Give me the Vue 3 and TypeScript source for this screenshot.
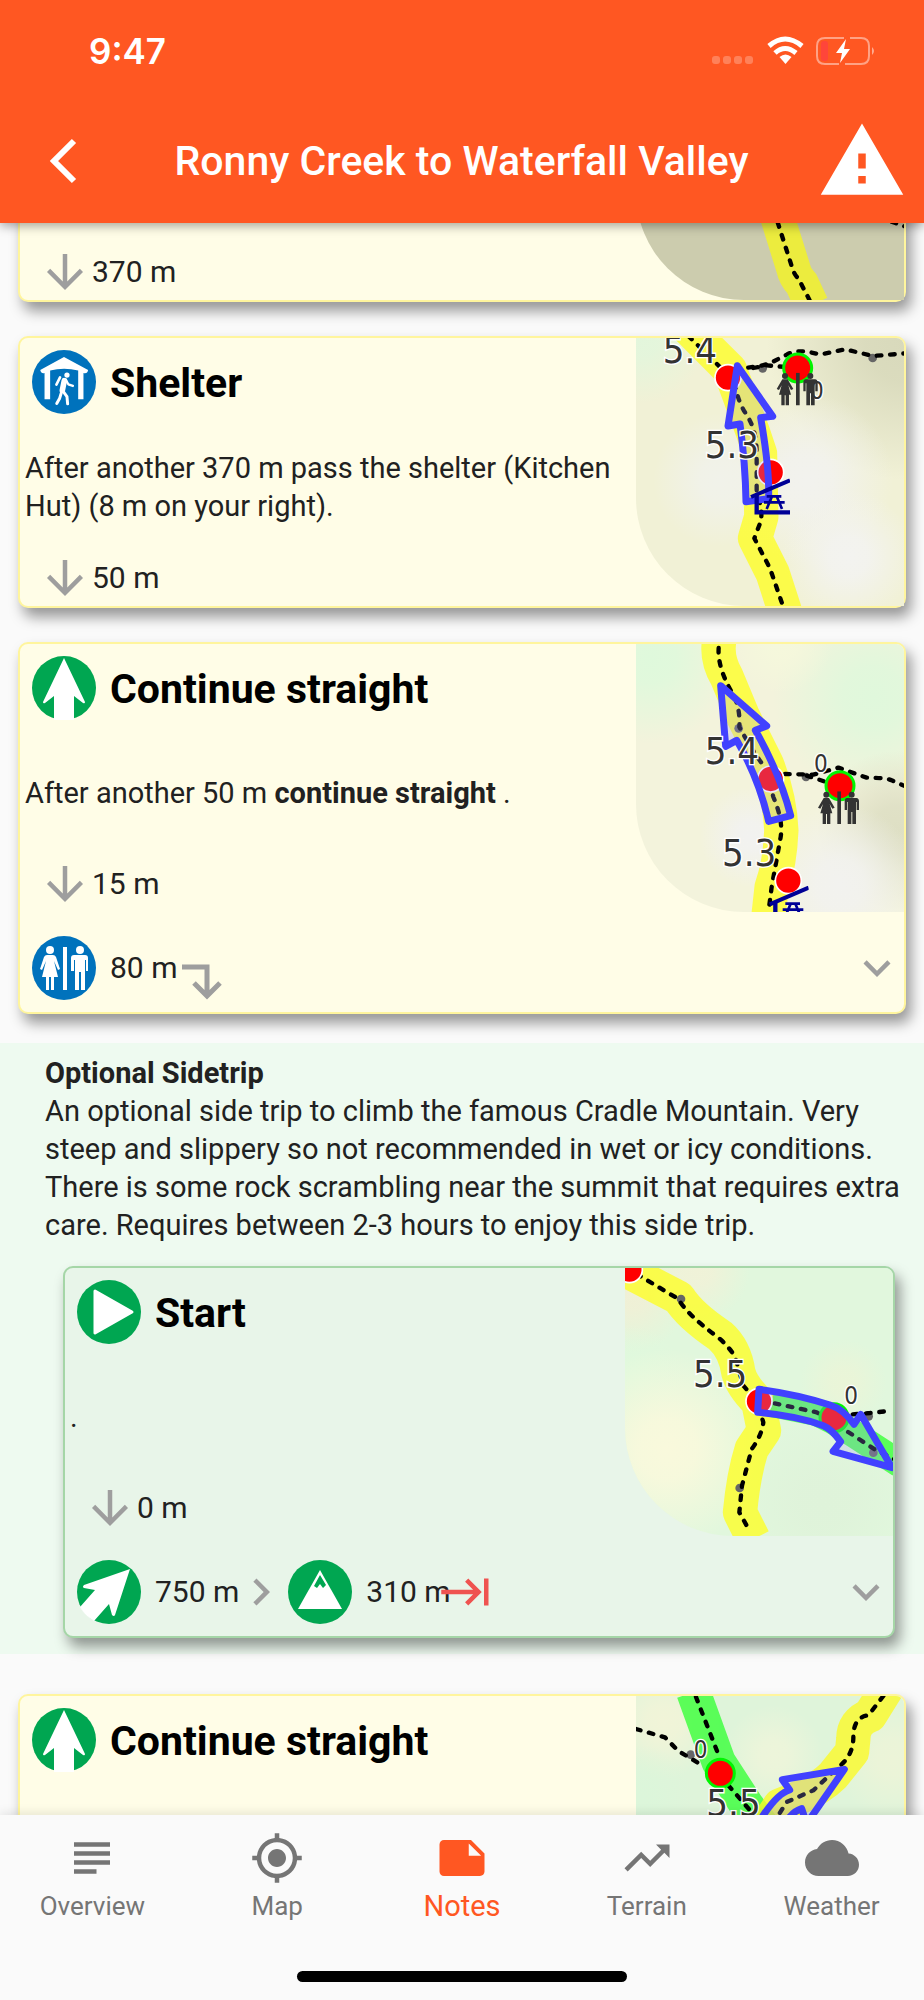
<script setup lang="ts">
import { ref } from 'vue'

interface Stroke { d: string; color?: string; width?: number }
interface Dot { x: number; y: number; ring?: string }
interface Label { x: number; y: number; text: string; small?: boolean }
interface Blob { x: number; y: number; r: number; color: string }
interface TrailMap {
  box: string
  base: string
  blobs: Blob[]
  trails: Stroke[]
  dashes: string[]
  bends?: Dot[]
  dots?: Dot[]
  arrow?: string
  labels?: Label[]
  toilet?: Dot
  hut?: Dot
}
interface Leg { icon: string; distance: string; after: 'turn' | 'next' | 'end' }
interface Card {
  id: string
  icon?: string
  title?: string
  text?: string
  strong?: string
  tail?: string
  distance?: string
  legs?: Leg[]
  map: TrailMap
}
interface Block { id: string; side?: boolean; heading?: string; intro?: string; cards: Card[] }

const yellow = 'rgba(255,255,20,.72)'
const green = 'rgba(60,255,60,.82)'

const blocks: Block[] = [
  {
    id: 'main-a',
    cards: [
      {
        id: 'previous',
        distance: '370 m',
        map: {
          box: '48 -549 804 804',
          base: '#ccccae',
          blobs: [],
          trails: [{ d: 'M470 0 L520 160 Q525 185 545 205 L575 270', color: 'rgba(240,240,50,.9)' }],
          dashes: ['M473 22 L514 150 Q520 176 536 192 L572 262', 'M815 20 L860 36'],
        },
      },
      {
        id: 'shelter',
        icon: 'shelter',
        title: 'Shelter',
        text: 'After another 370 m pass the shelter (Kitchen Hut) (8 m on your right).',
        distance: '50 m',
        map: {
          box: '48 54 804 804',
          base: '#f1f1d6',
          blobs: [
            { x: 860, y: 60, r: 420, color: '#d8d9bb' },
            { x: 60, y: 50, r: 200, color: '#e3f6dc' },
            { x: 560, y: 480, r: 260, color: '#f2f2ee' },
            { x: 685, y: 710, r: 200, color: '#f3f3f0' },
            { x: 300, y: 480, r: 200, color: '#f1f2ea' },
          ],
          trails: [{ d: 'M200 20 L330 150 L400 340 L420 400 L424 590 L405 655 L458 760 L500 890' }],
          dashes: [
            'M205 48 L345 185 Q350 240 380 285 Q410 330 410 400 L410 520 Q432 575 420 610 L403 655 L450 745 L500 890',
            'M345 148 L420 138 L450 130 L500 104 Q535 84 600 104 L675 88 L760 108 L856 100',
            'M400 144 L440 136 L530 144',
          ],
          bends: [{ x: 428, y: 145 }, { x: 758, y: 114 }],
          dots: [{ x: 324, y: 173 }, { x: 452, y: 457 }, { x: 533, y: 144, ring: '#00f500' }],
          arrow: 'M352 137 L458 289 L422 293 Q444 420 446 500 L446 536 L378 545 Q376 430 360 312 L324 318 Z',
          labels: [
            { x: 128, y: 130, text: '5.4' },
            { x: 254, y: 415, text: '5.3' },
            { x: 570, y: 238, text: '0', small: true },
          ],
          toilet: { x: 533, y: 158 },
          hut: { x: 390, y: 475 },
        },
      },
      {
        id: 'straight',
        icon: 'straight',
        title: 'Continue straight',
        text: 'After another 50 m ',
        strong: 'continue straight',
        tail: ' .',
        distance: '15 m',
        legs: [{ icon: 'toilet', distance: '80 m', after: 'turn' }],
        map: {
          box: '48 41 804 804',
          base: '#f3f3dc',
          blobs: [
            { x: 90, y: 80, r: 260, color: '#dff9dc' },
            { x: 760, y: 200, r: 300, color: '#e0f8dc' },
            { x: 480, y: 30, r: 160, color: '#f5f8dc' },
            { x: 830, y: 600, r: 240, color: '#dedfc4' },
            { x: 660, y: 760, r: 240, color: '#f2f2ef' },
            { x: 390, y: 620, r: 150, color: '#f2f2f0' },
          ],
          trails: [{ d: 'M300 20 Q285 80 320 140 L370 260 L440 400 Q480 500 484 600 Q480 700 455 770 L444 870' }],
          dashes: [
            'M296 53 Q292 110 335 185 Q362 230 358 290 Q390 350 440 420 L460 500 Q490 570 482 620 L455 770 L446 840',
            'M495 431 L580 433 L655 412 L740 442 Q800 442 815 450 L856 468',
            'M560 436 L640 462',
          ],
          bends: [{ x: 356, y: 294 }, { x: 558, y: 440 }],
          dots: [{ x: 452, y: 446 }, { x: 505, y: 751 }, { x: 660, y: 466, ring: '#00f500' }],
          arrow: 'M302 166 L440 287 L406 300 Q480 430 512 556 L446 573 Q415 440 350 330 L317 348 Z',
          labels: [
            { x: 254, y: 402, text: '5.4' },
            { x: 306, y: 707, text: '5.3' },
            { x: 582, y: 425, text: '0', small: true },
          ],
          toilet: { x: 657, y: 483 },
          hut: { x: 446, y: 766 },
        },
      },
    ],
  },
  {
    id: 'sidetrip',
    side: true,
    heading: 'Optional Sidetrip',
    intro:
      'An optional side trip to climb the famous Cradle Mountain. Very steep and slippery so not recommended in wet or icy conditions. There is some rock scrambling near the summit that requires extra care. Requires between 2-3 hours to enjoy this side trip.',
    cards: [
      {
        id: 'start',
        icon: 'start',
        title: 'Start',
        text: '.',
        distance: '0 m',
        legs: [
          { icon: 'bearing', distance: '750 m', after: 'next' },
          { icon: 'summit', distance: '310 m', after: 'end' },
        ],
        map: {
          box: '45 57 804 804',
          base: '#e1f7dd',
          blobs: [
            { x: 60, y: 130, r: 180, color: '#f0f0d6' },
            { x: 260, y: 60, r: 160, color: '#f0f2d8' },
            { x: 70, y: 380, r: 150, color: '#e0f9dd' },
            { x: 170, y: 600, r: 300, color: '#f9f9dc' },
            { x: 700, y: 400, r: 130, color: '#eaf5d8' },
            { x: 640, y: 760, r: 260, color: '#dff3da' },
          ],
          trails: [
            { d: 'M20 50 L206 146 Q240 200 330 260 Q375 300 385 370 Q395 410 445 460 L462 545 L425 600 Q400 680 390 790 L430 870' },
            { d: 'M485 463 L620 490 L670 515 L740 560 L870 645', color: green, width: 82 },
          ],
          dashes: [
            'M80 75 L205 150 Q230 195 320 262 Q350 285 375 322 L400 410 L440 455 L460 520 Q455 560 425 600 L396 710 L388 790 L420 848',
            'M455 455 L620 490 L670 520 L800 605 L856 632',
            'M728 496 L780 492 L835 486',
          ],
          bends: [{ x: 213, y: 150 }, { x: 389, y: 717 }, { x: 776, y: 502 }, { x: 790, y: 611 }],
          dots: [{ x: 58, y: 62 }, { x: 447, y: 457 }, { x: 672, y: 506, ring: '#00f500' }],
          arrow: 'M447 421 Q560 436 660 468 Q700 480 732 526 L752 496 L846 656 L669 607 L692 578 Q665 540 640 530 Q560 500 443 490 Z',
          labels: [{ x: 249, y: 413, text: '5.5' }, { x: 703, y: 464, text: '0', small: true }],
        },
      },
    ],
  },
  {
    id: 'main-b',
    cards: [
      {
        id: 'straight-on',
        icon: 'straight',
        title: 'Continue straight',
        map: {
          box: '108 112 804 804',
          base: '#dff4da',
          blobs: [
            { x: 190, y: 190, r: 170, color: '#f1f4d8' },
            { x: 520, y: 290, r: 150, color: '#edf5da' },
            { x: 880, y: 300, r: 180, color: '#ecf4d8' },
            { x: 120, y: 420, r: 160, color: '#dcf6da' },
          ],
          trails: [
            { d: 'M280 100 L356 310 L440 440 L500 520', color: green },
            { d: 'M860 90 L810 170 Q760 190 760 240 L756 280 L700 350 Q650 400 540 440 L500 500', color: 'rgba(250,250,40,.8)' },
          ],
          dashes: [
            'M288 115 L360 300 M385 380 L450 455',
            'M850 112 L805 170 Q762 175 760 230 Q762 290 715 325 L640 395 L560 430 L535 470',
            'M108 211 L195 236 L235 277 L300 316',
          ],
          bends: [{ x: 272, y: 288 }],
          dots: [{ x: 361, y: 344, ring: '#00f500' }],
          arrow: 'M733 332 L547 363 L569 394 Q530 405 480 485 L540 520 Q570 460 605 450 L620 495 Z',
          labels: [{ x: 319, y: 473, text: '5.5' }, { x: 281, y: 298, text: '0', small: true }],
        },
      },
    ],
  },
]

const tabs = [
  { id: 'overview', label: 'Overview', d: 'M14 17H4v2h10v-2zm6-8H4v2h16V9zM4 15h16v-2H4v2zM4 5v2h16V5H4z' },
  {
    id: 'map',
    label: 'Map',
    d: 'M12 8c-2.21 0-4 1.79-4 4s1.79 4 4 4 4-1.79 4-4-1.79-4-4-4zm8.94 3A8.994 8.994 0 0013 3.06V1h-2v2.06A8.994 8.994 0 003.06 11H1v2h2.06A8.994 8.994 0 0011 20.94V23h2v-2.06A8.994 8.994 0 0020.94 13H23v-2h-2.06zM12 19c-3.87 0-7-3.13-7-7s3.13-7 7-7 7 3.13 7 7-3.13 7-7 7z',
  },
  {
    id: 'notes',
    label: 'Notes',
    d: 'M22 10l-6-6H4c-1.1 0-2 .9-2 2v12.01c0 1.1.9 1.99 2 1.99l16-.01c1.1 0 2-.89 2-1.99v-8zm-7-4.5l5.500 5.500H15V5.500z',
  },
  {
    id: 'terrain',
    label: 'Terrain',
    d: 'M16 6l2.290 2.290-4.880 4.880-4-4L2 16.590 3.410 18l6-6 4 4 6.300-6.290L22 12V6z',
  },
  {
    id: 'weather',
    label: 'Weather',
    d: 'M19.350 10.040C18.670 6.590 15.640 4 12 4 9.110 4 6.600 5.640 5.350 8.040 2.340 8.360 0 10.910 0 14c0 3.310 2.690 6 6 6h13c2.760 0 5-2.240 5-5 0-2.640-2.050-4.780-4.650-4.960z',
  },
]
const active = ref('notes')
</script>

<template>
  <div class="screen">
    <svg class="sprite" aria-hidden="true">
      <symbol id="shelter" viewBox="25 24 194 194">
        <circle cx="122" cy="121" r="97" fill="#0072bc" />
        <path d="M122 45 L195 85 Q193 97 181 94 V173 H165 V86 Q122 76 80 86 V173 H63 V94 Q53 97 50 85 Z" fill="#fff" />
        <circle cx="131" cy="100" r="8" fill="#fff" />
        <g fill="none" stroke="#fff" stroke-linecap="round" stroke-linejoin="round">
          <path d="M110 107 L99 129" stroke-width="8" />
          <path d="M123 117 L117 146" stroke-width="17" />
          <path d="M127 113 L135 128 L149 133" stroke-width="7" />
          <path d="M115 150 L109 170 L100 186" stroke-width="9" />
          <path d="M120 150 L131 165 L133 187" stroke-width="9" />
        </g>
      </symbol>
      <symbol id="straight" viewBox="0 0 64 64">
        <circle cx="32" cy="32" r="32" fill="#00a651" />
        <path d="M32 2 L53 46 Q53 48 51 47 L42 40 V64 H22 V40 L13 47 Q11 48 11 46 Z" fill="#fff" />
      </symbol>
      <symbol id="toilet" viewBox="0 0 64 64">
        <circle cx="32" cy="32" r="32" fill="#0072bc" />
        <g fill="#fff">
          <circle cx="18" cy="14" r="4" />
          <path d="M15 19 H21 Q23 19 24 21 L28 33 L26 34 L22 25 L26 41 H22 V54 H19 V41 H17 V54 H14 V41 H10 L14 25 L10 34 L8 33 L12 21 Q13 19 15 19Z" />
          <path d="M31 11 H35 V54 H31Z" />
          <circle cx="48" cy="14" r="4" />
          <path d="M42 19 H53 Q56 19 56 22 V35 H54 V24 H53 V54 H49 V36 H47 V54 H43 V24 H42 V35 H39 V22 Q39 19 42 19Z" />
        </g>
      </symbol>
      <symbol id="start" viewBox="0 0 64 64">
        <circle cx="32" cy="32" r="32" fill="#00a651" />
        <path d="M18 11 L55 32 L18 53 Z" fill="#fff" stroke="#fff" stroke-width="3" stroke-linejoin="round" />
      </symbol>
      <symbol id="bearing" viewBox="0 0 64 64">
        <circle cx="32" cy="32" r="32" fill="#00a651" />
        <path d="M53 9 L38 55 Q37 57 35 55 L32 44 L17 61 Q7 55 3 47 L18 30 L7 28 Q5 27 7 25 Z" fill="#fff" />
      </symbol>
      <symbol id="summit" viewBox="0 0 64 64">
        <circle cx="32" cy="32" r="32" fill="#00a651" />
        <path d="M32 10 L54 49 H10 Z" fill="#fff" />
        <path d="M32 15 L38 25 L35 28 L32 24 L29 28 L26 26 Z" fill="#00a651" />
      </symbol>
      <symbol id="toilet-pin" viewBox="0 0 130 100">
        <g fill="#333">
          <circle cx="26" cy="10" r="9" />
          <path d="M18 20 H34 L51 49 L44 52 L36 38 L44 66 H38 V98 H28 V68 H25 V98 H15 V66 H8 L16 38 L8 52 L1 49 Z" />
          <path d="M59 0 H70 V98 H59Z" />
          <circle cx="102" cy="10" r="9" />
          <path d="M88 20 H116 Q124 21 124 30 V56 H117 V32 H115 V98 H104 V62 H101 V98 H90 V32 H88 V56 H81 V30 Q81 21 88 20Z" />
        </g>
      </symbol>
      <symbol id="hut-pin" viewBox="0 0 120 110">
        <g fill="none" stroke="#000096" stroke-width="12">
          <path d="M3 56 L120 6" />
          <path d="M20 48 V102 H120" stroke-width="13" />
          <path d="M50 54 H94 M42 72 H104 M66 54 L50 92 M80 54 L96 92" stroke-width="8" />
        </g>
      </symbol>
    </svg>

    <header class="top">
      <div class="status">
        <span class="clock">9:47</span>
        <svg class="status-icons" viewBox="0 0 166 32" aria-hidden="true">
          <g fill="#fff" fill-opacity=".25">
            <rect x="0" y="21" width="8" height="8" rx="3" />
            <rect x="11" y="21" width="8" height="8" rx="3" />
            <rect x="22" y="21" width="8" height="8" rx="3" />
            <rect x="33" y="21" width="8" height="8" rx="3" />
          </g>
          <g fill="none" stroke="#fff" stroke-width="5">
            <path d="M57 11 Q73 -3 90 11" />
            <path d="M63 18 Q73 9 84 18" />
          </g>
          <path d="M73.500 29 L67.500 22 Q73.500 17 79.500 22Z" fill="#fff" />
          <g fill="none" stroke="#fff" stroke-opacity=".45" stroke-width="2">
            <path d="M132 3 H113 Q105 3 105 11 V21 Q105 29 113 29 H127" />
            <path d="M138 3 H149 Q157 3 157 11 V21 Q157 29 149 29 H133" />
          </g>
          <path d="M160 12 Q164 16 160 20Z" fill="#fff" fill-opacity=".5" />
          <rect x="109" y="6" width="7" height="20" rx="3" fill="#ff453a" />
          <path d="M134 4 L124 18 H130 L128 28 L138 14 H132Z" fill="#fff" />
        </svg>
      </div>
      <div class="bar">
        <button class="back" type="button" aria-label="Back">
          <svg viewBox="0 0 30 46"><path d="M26 3 L6 23 L26 43" fill="none" stroke="#fff" stroke-width="6" /></svg>
        </button>
        <h1>Ronny Creek to Waterfall Valley</h1>
        <button class="alert" type="button" aria-label="Alerts">
          <svg viewBox="0 0 24 24"><path d="M1 21h22L12 2 1 21zm12-3h-2v-2h2v2zm0-4h-2v-4h2v4z" fill="#fff" /></svg>
        </button>
      </div>
    </header>

    <main class="scroller">
      <div class="notes">
        <section v-for="block in blocks" :key="block.id" class="block" :class="{ side: block.side }">
          <div v-if="block.heading" class="intro">
            <h2>{{ block.heading }}</h2>
            <p>{{ block.intro }}</p>
          </div>
          <article v-for="card in block.cards" :key="card.id" class="card">
            <div class="card-main">
              <div class="info">
                <div class="head">
                  <svg v-if="card.icon" class="badge" aria-hidden="true"><use :href="'#' + card.icon" /></svg>
                  <h3 v-if="card.title">{{ card.title }}</h3>
                </div>
                <p class="text">{{ card.text }}<strong v-if="card.strong">{{ card.strong }}</strong>{{ card.tail }}</p>
                <div class="distance">
                  <template v-if="card.distance">
                    <svg class="mi" viewBox="0 0 24 24" aria-hidden="true">
                      <path d="M20 12l-1.410-1.410L13 16.170V4h-2v12.170l-5.580-5.590L4 12l8 8 8-8z" />
                    </svg>
                    <span>{{ card.distance }}</span>
                  </template>
                </div>
              </div>
              <svg class="map" :viewBox="card.map.box" aria-hidden="true">
                <defs>
                  <radialGradient v-for="(b, i) in card.map.blobs" :id="card.id + i" :key="i">
                    <stop offset="0" :stop-color="b.color" />
                    <stop offset=".3" :stop-color="b.color" stop-opacity=".9" />
                    <stop offset="1" :stop-color="b.color" stop-opacity="0" />
                  </radialGradient>
                </defs>
                <rect x="0" y="-600" width="1000" height="1600" :fill="card.map.base" />
                <circle v-for="(b, i) in card.map.blobs" :key="'b' + i" :cx="b.x" :cy="b.y" :r="b.r" :fill="`url(#${card.id}${i})`" />
                <path
                  v-for="(t, i) in card.map.trails" :key="'t' + i" class="trail" :d="t.d"
                  :stroke="t.color ?? yellow" :stroke-width="t.width ?? 103"
                />
                <circle v-for="(p, i) in card.map.bends" :key="'p' + i" :cx="p.x" :cy="p.y" r="13" fill="#666" />
                <path v-for="(d, i) in card.map.dashes" :key="'d' + i" class="dash" :d="d" />
                <circle
                  v-for="(p, i) in card.map.dots" :key="'o' + i" :cx="p.x" :cy="p.y" :r="p.ring ? 42 : 39"
                  fill="#f00" :stroke="p.ring ?? '#fff'" :stroke-width="p.ring ? 9 : 5"
                />
                <path v-if="card.map.arrow" class="arrow" :d="card.map.arrow" />
                <text
                  v-for="(l, i) in card.map.labels" :key="'l' + i" class="label" :class="{ small: l.small }"
                  :x="l.x" :y="l.y"
                >{{ l.text }}</text>
                <use v-if="card.map.toilet" href="#toilet-pin" :x="card.map.toilet.x - 64" :y="card.map.toilet.y" width="130" height="100" />
                <use v-if="card.map.hut" href="#hut-pin" :x="card.map.hut.x" :y="card.map.hut.y" width="120" height="110" />
              </svg>
            </div>
            <div v-if="card.legs" class="legs">
              <div v-for="leg in card.legs" :key="leg.icon" class="leg">
                <svg class="badge" aria-hidden="true"><use :href="'#' + leg.icon" /></svg>
                <span>{{ leg.distance }}</span>
                <svg v-if="leg.after === 'turn'" class="turn" viewBox="0 0 54 54" aria-hidden="true">
                  <path d="M5 12 H30 V40 M17 28 L30 41 L43 28" fill="none" stroke="#9e9e9e" stroke-width="5" />
                </svg>
                <svg v-else-if="leg.after === 'next'" class="mi next" viewBox="0 0 24 24" aria-hidden="true">
                  <path d="M10 6L8.590 7.410 13.170 12l-4.580 4.590L10 18l6-6z" />
                </svg>
                <svg v-else class="end" viewBox="0 0 24 24" aria-hidden="true">
                  <path d="M11.590 7.410L15.170 11H1v2h14.170l-3.590 3.590L13 18l6-6-6-6-1.410 1.410zM20 6v12h2V6h-2z" />
                </svg>
              </div>
              <button class="more" type="button" aria-label="Show more">
                <svg class="mi" viewBox="0 0 24 24"><path d="M16.590 8.590L12 13.170 7.410 8.590 6 10l6 6 6-6z" /></svg>
              </button>
            </div>
          </article>
        </section>
      </div>
    </main>

    <nav class="nav">
      <div class="tabs">
        <button
          v-for="tab in tabs" :key="tab.id" type="button" class="tab" :class="{ active: active === tab.id }"
          @click="active = tab.id"
        >
          <svg viewBox="0 0 24 24" aria-hidden="true"><path :d="tab.d" fill="currentColor" /></svg>
          <span>{{ tab.label }}</span>
        </button>
      </div>
      <div class="home"></div>
    </nav>
  </div>
</template>

<style>
body {
  margin: 0;
}
</style>

<style scoped>
.screen {
  display: flex;
  flex-direction: column;
  height: 100vh;
  background: #fafafa;
  color: #212121;
  font-family: Roboto, "Liberation Sans", sans-serif;
  font-size: 29px;
  font-weight: 400;
  line-height: 38px;
}
.sprite {
  position: absolute;
  width: 0;
  height: 0;
}
h1, h2, h3, p {
  margin: 0;
}
button {
  padding: 0;
  border: 0;
  background: none;
  color: inherit;
  font: inherit;
  display: flex;
  cursor: pointer;
}
.top {
  position: relative;
  z-index: 2;
  background: #ff5722;
  color: #fff;
  box-shadow: 0 3px 10px rgba(0, 0, 0, .35);
}
.status {
  display: flex;
  justify-content: space-between;
  align-items: center;
  height: 102px;
  padding: 0 46px 0 89px;
}
.clock {
  font-family: Inter, "Liberation Sans", sans-serif;
  font-size: 35px;
  font-weight: 600;
}
.status-icons {
  width: 166px;
  height: 32px;
}
.bar {
  display: flex;
  justify-content: space-between;
  align-items: center;
  height: 118px;
  padding: 0 17px 3px 48px;
}
.back {
  width: 58px;
}
.back svg {
  width: 30px;
  height: 46px;
}
.alert svg {
  width: 90px;
  height: 90px;
}
h1 {
  flex: 1;
  text-align: center;
  font-size: 41px;
  line-height: 52px;
  font-weight: 500;
}
.scroller {
  flex: 1;
  min-height: 0;
  overflow: hidden;
}
.notes {
  margin-top: -210px;
}
.block {
  display: flow-root;
  padding-bottom: 12px;
}
.card {
  margin: 17px 18px 34px;
  border: 2px solid #fff59d;
  border-radius: 10px;
  background: #fffde7;
  box-shadow: 5px 9px 14px rgba(0, 0, 0, .4);
}
.card:last-child {
  margin-bottom: 17px;
}
.card-main {
  display: flex;
  min-height: 268px;
}
.info {
  flex: 1;
  min-width: 0;
  display: flex;
  flex-direction: column;
}
.head {
  display: flex;
  align-items: center;
  gap: 14px;
  height: 70px;
  padding: 9px 12px 3px;
}
.badge {
  flex: none;
  width: 64px;
  height: 64px;
}
h3 {
  padding-top: 2px;
  color: #000;
  font-size: 41px;
  line-height: 50px;
  font-weight: 700;
}
.text {
  flex: 1;
  display: block;
  align-content: center;
  padding: 3px 5px 0;
}
h2, strong {
  font-size: inherit;
  font-weight: 700;
}
.distance {
  display: flex;
  align-items: center;
  height: 56px;
  padding-left: 18px;
  font-size: 30px;
}
.mi {
  flex: none;
  width: 54px;
  height: 54px;
  fill: #9e9e9e;
}
.map {
  flex: none;
  width: 268px;
  height: 268px;
  border-radius: 0 8px 0 108px;
}
.trail, .dash, .arrow {
  fill: none;
  stroke-linejoin: round;
}
.dash {
  stroke: #000;
  stroke-width: 13;
  stroke-linecap: round;
  stroke-dasharray: 14 26;
}
.arrow {
  fill: rgba(163, 160, 255, .25);
  stroke: #4141ff;
  stroke-width: 21;
}
.label {
  font-family: "DejaVu Sans Condensed", "Noto Sans", sans-serif;
  font-size: 114px;
  fill: #333;
  stroke: #fff;
  stroke-width: 8;
  paint-order: stroke;
}
.label.small {
  font-size: 72px;
}
.legs {
  display: flex;
  align-items: center;
  height: 64px;
  padding: 24px 0 12px 12px;
  font-size: 30px;
}
.leg {
  display: flex;
  align-items: center;
}
.leg span {
  margin-left: 14px;
}
.next {
  margin-left: -5px;
}
.turn {
  width: 54px;
  height: 54px;
  margin-top: 28px;
}
.end {
  width: 54px;
  height: 54px;
  margin-left: -12px;
  fill: #ef5350;
}
.more {
  margin-left: auto;
}
.side {
  background: #eefaf0;
  margin-bottom: 23px;
  padding-top: 11px;
  padding-bottom: 16px;
}
.side .card {
  margin: 22px 29px 0 63px;
  border-color: #a5d6a7;
  background: #e8f5e9;
}
.intro {
  padding: 0 24px 0 45px;
}
.nav {
  position: relative;
  z-index: 2;
  background: #fafafa;
  box-shadow: 0 -2px 10px rgba(0, 0, 0, .1);
}
.tabs {
  display: flex;
  height: 156px;
}
.tab {
  flex: 1;
  flex-direction: column;
  align-items: center;
  padding-top: 16px;
  color: #757575;
  font-size: 26px;
  line-height: 38px;
}
.tab svg {
  width: 54px;
  height: 54px;
  margin-bottom: 2px;
}
.tab.active {
  color: #ff5722;
  font-size: 29px;
}
.home {
  width: 330px;
  height: 11px;
  margin: 0 auto 18px;
  border-radius: 6px;
  background: #000;
}
</style>
